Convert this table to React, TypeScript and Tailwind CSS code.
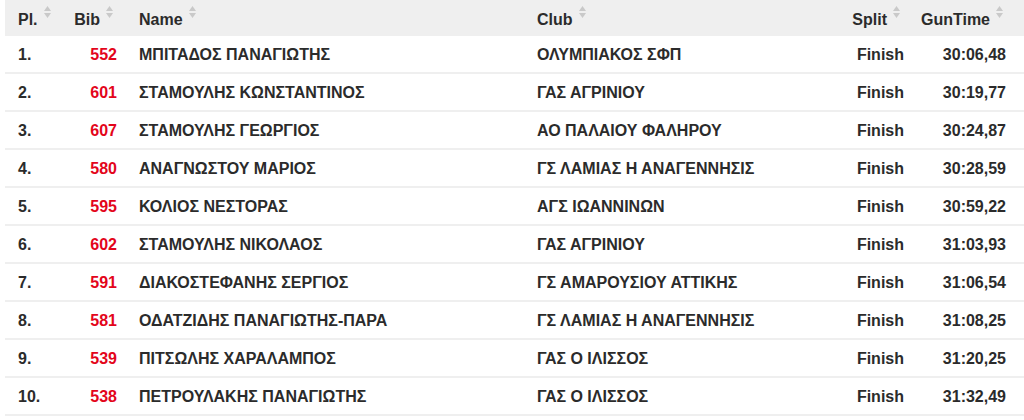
import React from "react";

type Row = {
  pl: string;
  bib: string;
  name: string;
  club: string;
  split: string;
  time: string;
};

const rows: Row[] = [
  { pl: "1.", bib: "552", name: "ΜΠΙΤΑΔΟΣ ΠΑΝΑΓΙΩΤΗΣ", club: "ΟΛΥΜΠΙΑΚΟΣ ΣΦΠ", split: "Finish", time: "30:06,48" },
  { pl: "2.", bib: "601", name: "ΣΤΑΜΟΥΛΗΣ ΚΩΝΣΤΑΝΤΙΝΟΣ", club: "ΓΑΣ ΑΓΡΙΝΙΟΥ", split: "Finish", time: "30:19,77" },
  { pl: "3.", bib: "607", name: "ΣΤΑΜΟΥΛΗΣ ΓΕΩΡΓΙΟΣ", club: "ΑΟ ΠΑΛΑΙΟΥ ΦΑΛΗΡΟΥ", split: "Finish", time: "30:24,87" },
  { pl: "4.", bib: "580", name: "ΑΝΑΓΝΩΣΤΟΥ ΜΑΡΙΟΣ", club: "ΓΣ ΛΑΜΙΑΣ Η ΑΝΑΓΕΝΝΗΣΙΣ", split: "Finish", time: "30:28,59" },
  { pl: "5.", bib: "595", name: "ΚΟΛΙΟΣ ΝΕΣΤΟΡΑΣ", club: "ΑΓΣ ΙΩΑΝΝΙΝΩΝ", split: "Finish", time: "30:59,22" },
  { pl: "6.", bib: "602", name: "ΣΤΑΜΟΥΛΗΣ ΝΙΚΟΛΑΟΣ", club: "ΓΑΣ ΑΓΡΙΝΙΟΥ", split: "Finish", time: "31:03,93" },
  { pl: "7.", bib: "591", name: "ΔΙΑΚΟΣΤΕΦΑΝΗΣ ΣΕΡΓΙΟΣ", club: "ΓΣ ΑΜΑΡΟΥΣΙΟΥ ΑΤΤΙΚΗΣ", split: "Finish", time: "31:06,54" },
  { pl: "8.", bib: "581", name: "ΟΔΑΤΖΙΔΗΣ ΠΑΝΑΓΙΩΤΗΣ-ΠΑΡΑ", club: "ΓΣ ΛΑΜΙΑΣ Η ΑΝΑΓΕΝΝΗΣΙΣ", split: "Finish", time: "31:08,25" },
  { pl: "9.", bib: "539", name: "ΠΙΤΣΩΛΗΣ ΧΑΡΑΛΑΜΠΟΣ", club: "ΓΑΣ Ο ΙΛΙΣΣΟΣ", split: "Finish", time: "31:20,25" },
  { pl: "10.", bib: "538", name: "ΠΕΤΡΟΥΛΑΚΗΣ ΠΑΝΑΓΙΩΤΗΣ", club: "ΓΑΣ Ο ΙΛΙΣΣΟΣ", split: "Finish", time: "31:32,49" },
];

// little up/down sort arrows next to each header label
const SortIcon = () => (
  <svg width="7" height="12" viewBox="0 0 7 12" className="ml-[6px] shrink-0">
    <path d="M3.5 0 L7 5 L0 5 Z" fill="#c9c9c9" />
    <path d="M0 7 L7 7 L3.5 12 Z" fill="#c9c9c9" />
  </svg>
);

const HeadCell = ({ label, className }: { label: string; className: string }) => (
  <div className={`flex items-start pt-[6px] ${className}`}>
    <span className="mt-[4px] leading-[20px]">{label}</span>
    <SortIcon />
  </div>
);

const App = () => {
  return (
    <div
      className="w-[1024px] h-[420px] bg-white pl-[5px] text-[16px] font-bold text-[#2b2b2b] overflow-hidden"
      style={{ fontFamily: '"Liberation Sans", Arial, sans-serif' }}
    >
      <div className="flex h-[36px] bg-[#efefef]">
        <HeadCell label="Pl." className="w-[55px] pl-[13px]" />
        <HeadCell label="Bib" className="w-[67px] justify-end pr-[14px]" />
        <HeadCell label="Name" className="w-[398px] pl-[12px]" />
        <HeadCell label="Club" className="w-[295px] pl-[12px]" />
        <HeadCell label="Split" className="w-[94px] justify-end pr-[14px]" />
        <HeadCell label="GunTime" className="w-[102px] justify-end pr-[13px]" />
      </div>

      {rows.map((r) => (
        <div
          key={r.pl}
          className="flex items-center h-[38px] pt-[2px] border-b-2 border-[#efefef] leading-[20px]"
        >
          <div className="w-[55px] pl-[13px]">{r.pl}</div>
          <div className="w-[67px] pr-[10px] text-right text-[#e3051b]">{r.bib}</div>
          <div className="w-[398px] pl-[12px] whitespace-nowrap">{r.name}</div>
          <div className="w-[295px] pl-[12px] whitespace-nowrap">{r.club}</div>
          <div className="w-[94px] pr-[10px] text-right">{r.split}</div>
          <div className="w-[102px] pr-[10px] text-right">{r.time}</div>
        </div>
      ))}
    </div>
  );
};

export default App;
